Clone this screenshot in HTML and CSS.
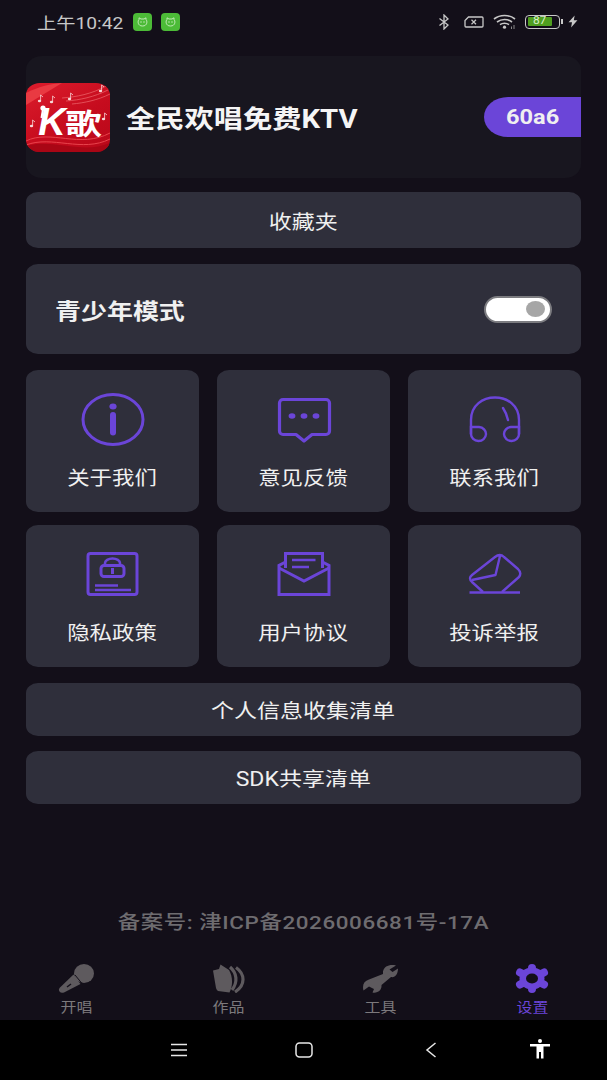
FILE: index.html
```html
<!DOCTYPE html>
<html lang="zh">
  <head>
    <meta charset="utf-8">
    <title>设置</title>
    <link rel="stylesheet" href="styles.css">
  </head>
  <body>
    <div class="statusbar">
      <span class="clock">上午10:42</span>
      <span class="notif"><svg viewBox="0 0 12 12"><path d="M2.5 3.5 L2.5 1.8 L4.5 3 H7.5 L9.5 1.8 V3.5 C11 5 11 10 6 10 C1 10 1 5 2.5 3.5Z" fill="none" stroke="#cfeec5" stroke-width=".9"/><circle cx="4.5" cy="6" r=".7" fill="#cfeec5"/><circle cx="7.5" cy="6" r=".7" fill="#cfeec5"/></svg></span>
      <span class="notif"><svg viewBox="0 0 12 12"><path d="M2.5 3.5 L2.5 1.8 L4.5 3 H7.5 L9.5 1.8 V3.5 C11 5 11 10 6 10 C1 10 1 5 2.5 3.5Z" fill="none" stroke="#cfeec5" stroke-width=".9"/><circle cx="4.5" cy="6" r=".7" fill="#cfeec5"/><circle cx="7.5" cy="6" r=".7" fill="#cfeec5"/></svg></span>
      <span class="status-right">
        <svg class="ic-bt" viewBox="0 0 12 16"><path d="M1.5 4.5 L10 11 L6 15 V1 L10 5 L1.5 11.5" fill="none" stroke="#c8c8c8" stroke-width="1.3"/></svg>
        <svg class="ic-sim" viewBox="0 0 20 12"><path d="M4.5 1 H18 a1 1 0 0 1 1 1 V10 a1 1 0 0 1 -1 1 H2 a1 1 0 0 1 -1 -1 V4.5Z" fill="none" stroke="#c8c8c8" stroke-width="1.3"/><path d="M7.5 3.8 L12 8.2 M12 3.8 L7.5 8.2" stroke="#c8c8c8" stroke-width="1.2"/></svg>
        <svg class="ic-wifi" viewBox="0 0 23 15"><path d="M1 5 C7 .3 16 .3 22 5 M4 8 C8.5 4.6 14.5 4.6 19 8 M7 10.6 C9.5 8.8 13.5 8.8 16 10.6" fill="none" stroke="#c8c8c8" stroke-width="1.6"/><circle cx="11.5" cy="13.2" r="1.6" fill="#c8c8c8"/><path d="M18.5 12.5 V15 M21 11 V15" stroke="#8a8a8a" stroke-width="1"/></svg>
        <span class="battery"><span class="battery-level"><span class="battery-num">87</span></span></span>
        <span class="battery-tip"></span>
        <svg class="ic-bolt" viewBox="0 0 9 11"><path d="M6 0 L0.5 6.2 H3.6 L2.8 11 L8.5 4.4 H5.2Z" fill="#c8c8c8"/></svg>
      </span>
    </div>

    <div class="content">
      <div class="app-card">
        <div class="app-logo">
          <svg class="logo-art" viewBox="0 0 84 69">
            <defs>
              <g id="note"><ellipse cx="1.5" cy="6" rx="1.7" ry="1.2"/><path d="M2.6 6 V0 L5 2" fill="none" stroke="#f6d8d8" stroke-width=".8"/></g>
            </defs>
            <path d="M0 10 C14 3 24 1 36 0 L0 22Z" fill="#e93a42"/>
            <path d="M36 15 C50 14 66 11 80 3 M40 18 C54 17 68 14 82 7 M46 21 C58 20 72 17 84 11" fill="none" stroke="#ee6a70" stroke-width=".7"/>
            <path d="M0 58 C24 46 54 66 84 50 M0 62 C26 52 56 70 84 56" fill="none" stroke="#e8434c" stroke-width="1"/>
            <path d="M0 63 C28 55 56 72 84 60 V69 H0Z" fill="#a90615"/>
            <g fill="#f6d8d8">
              <use href="#note" x="73" y="2"/>
              <use href="#note" x="42" y="10"/>
              <use href="#note" x="24" y="13"/>
              <use href="#note" x="12" y="12"/>
              <use href="#note" x="4" y="37"/>
              <use href="#note" x="76" y="30"/>
            </g>
            <circle cx="17" cy="25" r="2.6" fill="#fff"/>
            <path d="M17 26 L15.5 35" stroke="#fff" stroke-width="2"/>
          </svg>
          <span class="logo-text"><b>K</b><span class="logo-ge">歌</span></span>
        </div>
        <div class="app-name">全民欢唱免费KTV</div>
        <div class="app-code"><span class="wide">60a6</span></div>
      </div>

      <div class="row-btn row-fav"><span class="wide">收藏夹</span></div>

      <div class="teen-card">
        <span class="teen-label">青少年模式</span>
        <span class="toggle"><span class="toggle-knob"></span></span>
      </div>

      <div class="grid">
        <div class="tile">
          <svg viewBox="0 0 64 53"><ellipse cx="32" cy="26.5" rx="30" ry="25" fill="none" stroke="#6b45d8" stroke-width="3"/><ellipse cx="32" cy="13.5" rx="3.6" ry="3" fill="#6b45d8"/><path d="M32 22 V39.5" stroke="#6b45d8" stroke-width="6" stroke-linecap="round"/></svg>
          <span class="wide">关于我们</span>
        </div>
        <div class="tile">
          <svg viewBox="0 0 64 53"><path d="M11 6.5 H54 a3.5 3.5 0 0 1 3.5 3.5 V38 a3.5 3.5 0 0 1 -3.5 3.5 H40 L32 48 L24 41.5 H11 a3.5 3.5 0 0 1 -3.5 -3.5 V10 a3.5 3.5 0 0 1 3.5 -3.5Z" fill="none" stroke="#6b45d8" stroke-width="3.2" stroke-linejoin="round"/><ellipse cx="20" cy="23" rx="3.4" ry="2.8" fill="#6b45d8"/><ellipse cx="32" cy="23" rx="3.4" ry="2.8" fill="#6b45d8"/><ellipse cx="44" cy="23" rx="3.4" ry="2.8" fill="#6b45d8"/></svg>
          <span class="wide">意见反馈</span>
        </div>
        <div class="tile">
          <svg viewBox="0 0 64 53"><path d="M8 41 V27 C8 -3 56 -3 56 27 V41 M40 15 C42 18 44 22 45 27" fill="none" stroke="#6b45d8" stroke-width="2.4" stroke-linecap="round"/><path d="M8 34 H16 a7.5 7 0 1 1 -8 7Z M56 34 H48 a7.5 7 0 1 0 8 7Z" fill="none" stroke="#6b45d8" stroke-width="2.4"/></svg>
          <span class="wide">联系我们</span>
        </div>
        <div class="tile">
          <svg viewBox="0 0 64 53"><rect x="7" y="5.5" width="49" height="41" rx="2.5" fill="none" stroke="#6b45d8" stroke-width="3"/><rect x="20" y="17.5" width="23" height="11" rx="3" fill="none" stroke="#6b45d8" stroke-width="3"/><path d="M24 17 V15 a7.5 4.5 0 0 1 15 0 V17" fill="none" stroke="#6b45d8" stroke-width="2.6"/><path d="M31.5 20 V26" stroke="#6b45d8" stroke-width="3"/><path d="M14 37.5 H37 M14 42 H50" stroke="#6b45d8" stroke-width="2.4"/></svg>
          <span class="wide">隐私政策</span>
        </div>
        <div class="tile">
          <svg viewBox="0 0 64 53"><path d="M13.5 20 V5.5 H50.5 V20 M13.5 14 L7 17.5 V46.5 H57 V17.5 L50.5 14" fill="none" stroke="#6b45d8" stroke-width="3"/><path d="M7 20 L32 33 L57 20" fill="none" stroke="#6b45d8" stroke-width="3"/><path d="M20 12 H43.5 M20 19 H37" stroke="#6b45d8" stroke-width="2.4"/></svg>
          <span class="wide">用户协议</span>
        </div>
        <div class="tile">
          <svg viewBox="0 0 64 53"><path d="M20 44 L9 34 Q5 30 9 27 L32 9 Q37 5 41 9 L55 21 Q59 25 56 29 L39 44 M9 32 L32.5 27 L37 8" fill="none" stroke="#6b45d8" stroke-width="2.4" stroke-linejoin="round"/><path d="M6.5 44.5 H57" stroke="#6b45d8" stroke-width="2.6"/></svg>
          <span class="wide">投诉举报</span>
        </div>
      </div>

      <div class="row-btn row-small"><span class="wide">个人信息收集清单</span></div>
      <div class="row-btn row-small"><span class="wide">SDK共享清单</span></div>
    </div>

    <div class="record"><span class="wide">备案号: 津ICP备2026006681号-17A</span></div>

    <nav class="tabs">
      <div class="tab">
        <svg viewBox="0 0 36 29"><ellipse cx="26" cy="9.5" rx="10" ry="9.5" fill="#5e5a5e"/><path d="M15.5 10.5 L22.5 20 L6 28.5 Q3 29.5 1.5 27.5 Q0 25.5 2 23.5Z" fill="#5e5a5e"/><path d="M17 11 L24 19.5" stroke="#130f19" stroke-width="1"/><path d="M9 23 L13 20" stroke="#130f19" stroke-width="1.4"/></svg>
        <span class="wide">开唱</span>
      </div>
      <div class="tab">
        <svg viewBox="0 0 36 29"><path d="M3 6.5 L9 5 L10.5 .5 L19 6 C23 13 23 22 19.5 28.5 L8 27 Q6.5 26 6 24Z" fill="#5e5a5e"/><path d="M20 3 C27 9 28 18 22 26" fill="none" stroke="#5e5a5e" stroke-width="3.2"/><path d="M26 3.5 C35 10 36 21 25 28" fill="none" stroke="#5e5a5e" stroke-width="3.2"/></svg>
        <span class="wide">作品</span>
      </div>
      <div class="tab">
        <svg viewBox="0 0 36 29"><path d="M34 1.5 C28 0 22 2 21 7.5 L21 10 L7 15.5 C2 17 0 21 1.5 26.5 L7 22.5 L12 25 L10.5 28.5 C16 29.5 20 26 19.5 21 L29 13 C33 14 36 10 36 4.5 L30.5 8 L27.5 5.5Z" fill="#5e5a5e"/></svg>
        <span class="wide">工具</span>
      </div>
      <div class="tab tab-on">
        <svg viewBox="0 0 36 29"><ellipse cx="18" cy="14.5" rx="12.5" ry="11" fill="#6b45d8"/><path d="M18 4 V25 M6 8.5 L30 20.5 M30 8.5 L6 20.5" stroke="#6b45d8" stroke-width="8" stroke-linecap="round"/><ellipse cx="18" cy="14.5" rx="6" ry="5" fill="#130f19"/></svg>
        <span class="wide">设置</span>
      </div>
    </nav>

    <div class="navbar">
      <svg class="nav-menu" viewBox="0 0 18 14"><path d="M1 1.5 H17 M1 7 H17 M1 12.5 H17" stroke="#e8e8e8" stroke-width="1.4"/></svg>
      <svg class="nav-home" viewBox="0 0 18 16"><rect x="1" y="1" width="16" height="14" rx="3.5" fill="none" stroke="#e8e8e8" stroke-width="1.5"/></svg>
      <svg class="nav-back" viewBox="0 0 12 16"><path d="M10.5 1 L2 8 L10.5 15" fill="none" stroke="#e8e8e8" stroke-width="1.5"/></svg>
      <svg class="nav-access" viewBox="0 0 20 20"><circle cx="10" cy="2" r="2" fill="#fff"/><path d="M0 5 H20 V7.5 H13.5 V19.5 H11 V13 H9 V19.5 H6.5 V7.5 H0Z" fill="#fff"/></svg>
    </div>
  </body>
</html>
```

FILE: styles.css
```css
:root {
  --bg: #130f19;
  --card: #2f2f3b;
  --purple: #6b45d8;
  --text: #f0f0f0;
  --sans: "Roboto", "Noto Sans CJK SC", sans-serif;
}

html, body {
  margin: 0;
  height: 100%;
}

body {
  width: 607px;
  height: 1080px;
  background-color: var(--bg);
  color: var(--text);
  font-family: var(--sans);
  display: flex;
  flex-direction: column;
  overflow: hidden;
}

/* the capture is stretched sideways, so the text is too */
.wide {
  display: inline-block;
  transform: scaleX(1.18);
  white-space: nowrap;
}

.statusbar {
  height: 43px;
  display: flex;
  align-items: center;
  padding: 0 29px 0 37px;
  flex: none;
}

.clock {
  font-size: 16px;
  color: #c8c8c8;
  margin-right: 24px;
  transform: scaleX(1.2);
  transform-origin: left;
}

.notif {
  width: 19px;
  height: 18px;
  background-color: #4cbb37;
  border-radius: 4px;
  margin-right: 9px;
  display: flex;
  align-items: center;
  justify-content: center;
}

.notif svg {
  width: 13px;
  height: 12px;
}

.status-right {
  margin-left: auto;
  display: flex;
  align-items: center;
}

.ic-bt { width: 12px; height: 16px; margin-right: 14px; }
.ic-sim { width: 20px; height: 12px; margin-right: 9px; }
.ic-wifi { width: 23px; height: 15px; margin-right: 9px; }

.battery {
  width: 35px;
  height: 14px;
  border: 1.5px solid #c8c8c8;
  border-radius: 4px;
  padding: 1.5px;
  box-sizing: border-box;
  display: block;
}

.battery-level {
  display: block;
  width: 24px;
  height: 100%;
  background-color: #4f9e1f;
  border-radius: 1px;
  color: #d8f0c8;
  font-size: 10px;
  line-height: 8px;
  text-align: center;
}

.battery-num {
  display: inline-block;
  transform: scaleX(1.2);
}

.battery-tip {
  width: 2px;
  height: 5px;
  background-color: #c8c8c8;
  margin: 0 5px 0 1px;
}

.ic-bolt { width: 10px; height: 13px; }

.content {
  padding: 13px 26px 0;
  display: flex;
  flex-direction: column;
}

.app-card {
  height: 122px;
  border-radius: 16px/14px;
  background-color: #18161f;
  display: flex;
  align-items: center;
  margin-bottom: 14px;
}

.app-logo {
  width: 84px;
  height: 69px;
  border-radius: 14px/12px;
  background: linear-gradient(150deg, #dc1c2c, #c60c1e 55%, #b80819);
  position: relative;
  overflow: hidden;
  flex: none;
  display: flex;
  justify-content: center;
  align-items: center;
  padding-top: 9px;
  box-sizing: border-box;
}

.logo-art {
  position: absolute;
  inset: 0;
  width: 100%;
  height: 100%;
}

.logo-text {
  position: relative;
  color: #fff;
  font-weight: 700;
  display: flex;
  align-items: center;
  line-height: 32px;
}

.logo-text b {
  font-family: "Liberation Sans", sans-serif;
  font-size: 38px;
  font-style: italic;
  margin-right: 3px;
}

.logo-ge {
  font-family: "Noto Sans CJK SC", sans-serif;
  font-size: 29px;
  transform: scaleX(1.25);
}

.app-name {
  margin-left: 16px;
  margin-bottom: 1px;
  font-size: 25px;
  font-weight: 700;
  color: #f5f5f5;
  white-space: nowrap;
  transform: scaleX(1.17);
  transform-origin: left;
}

.app-code {
  margin-left: auto;
  width: 97px;
  height: 40px;
  background-color: var(--purple);
  border-radius: 24px/20px 0 0 20px;
  font-size: 20px;
  font-weight: 700;
  line-height: 40px;
  text-align: center;
  flex: none;
}

.row-btn {
  background-color: var(--card);
  border-radius: 12px/10px;
  display: flex;
  align-items: center;
  justify-content: center;
  font-size: 19.5px;
  color: var(--text);
}

.row-fav {
  height: 56px;
  margin-bottom: 16px;
}

.row-small {
  height: 53px;
  margin-top: 16px;
}

.row-small + .row-small {
  margin-top: 15px;
}

.teen-card {
  height: 90px;
  background-color: var(--card);
  border-radius: 12px/10px;
  display: flex;
  align-items: center;
  justify-content: space-between;
  padding: 0 29px;
  margin-bottom: 16px;
}

.teen-label {
  margin-bottom: 1px;
  font-size: 22px;
  font-weight: 700;
  transform: scaleX(1.18);
  transform-origin: left;
}

.toggle {
  width: 68px;
  height: 27px;
  background-color: #fff;
  border: 2px solid #7c7c80;
  border-radius: 14px;
  display: flex;
  align-items: center;
  justify-content: flex-end;
  padding: 0 5px;
  box-sizing: border-box;
}

.toggle-knob {
  width: 19px;
  height: 16px;
  background-color: #a6a6a6;
  border-radius: 50%;
}

.grid {
  display: grid;
  grid-template-columns: repeat(3, 173px);
  grid-auto-rows: 142px;
  justify-content: space-between;
  row-gap: 13px;
}

.tile {
  background-color: var(--card);
  border-radius: 12px/10px;
  display: flex;
  flex-direction: column;
  align-items: center;
  padding-top: 23px;
  box-sizing: border-box;
  font-size: 19px;
}

.tile svg {
  width: 64px;
  height: 53px;
  margin-bottom: 18px;
}

.tile span {
  line-height: 30px;
}

.record {
  text-align: center;
  margin-top: 104px;
  font-size: 19px;
  font-weight: 500;
  letter-spacing: 0.5px;
  line-height: 30px;
  color: #6e6c70;
  flex: none;
}

.tabs {
  margin-top: auto;
  height: 56px;
  display: grid;
  grid-template-columns: repeat(4, 152px);
  flex: none;
}

.tab {
  display: flex;
  flex-direction: column;
  align-items: center;
  color: #7c797c;
  font-size: 13.5px;
}

.tab svg {
  width: 36px;
  height: 29px;
}

.tab span {
  line-height: 29px;
}

.tab-on { color: var(--purple); }

.navbar {
  height: 60px;
  background-color: #000;
  flex: none;
  position: relative;
}

.navbar svg {
  position: absolute;
}

.nav-menu { left: 170px; top: 23px; width: 18px; height: 14px; }
.nav-home { left: 295px; top: 22px; width: 18px; height: 16px; }
.nav-back { left: 425px; top: 22px; width: 12px; height: 16px; }
.nav-access { left: 530px; top: 19px; width: 20px; height: 20px; }
```
